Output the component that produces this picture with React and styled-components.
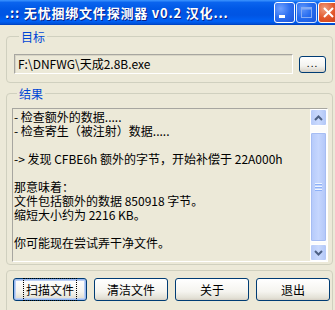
import styled, { createGlobalStyle } from "styled-components"

const Global = createGlobalStyle`
    html, body { margin: 0; padding: 0; background: #ECE9D8; }
    body { font-family: "Noto Sans CJK SC", "DejaVu Sans", sans-serif; font-size: 12px; }
`;

const Window = styled.div`
    width: 335px;
    height: 310px;
    overflow: hidden;
    background: #ECE9D8;
    display: flex;
    flex-direction: column;
`;

const TitleBar = styled.div`
    height: 25px;
    flex-shrink: 0;
    display: flex;
    align-items: center;
    padding-left: 5px;
    background: linear-gradient(to bottom, #3D95FF 0%, #0A64EE 10%, #0058E6 35%, #0054E3 60%, #0061F5 85%, #0050D8 95%, #003EBA 100%);
`;

const Title = styled.span`
    flex: 1;
    color: #fff;
    font-weight: 700;
    font-size: 13px;
    letter-spacing: 0.8px;
    white-space: nowrap;
    text-shadow: 1px 1px 0 #0A1F86;
`;

const Caps = styled.div`
    display: flex;
    gap: 1px;
    margin-right: -4px;
    align-self: flex-start;
    margin-top: 2px;
`;

const CapButton = styled.div`
    width: 21px;
    height: 21px;
    box-sizing: border-box;
    border: 1px solid #fff;
    border-radius: 3px;
    display: flex;
    align-items: center;
    justify-content: center;
    background: ${p => p.$close
        ? "radial-gradient(circle at 30% 30%, #F0A080 0%, #E2572C 50%, #C8401A 100%)"
        : "radial-gradient(circle at 30% 30%, #6FA0FF 0%, #2B6EF0 50%, #1F55D8 100%)"};
    opacity: ${p => p.$disabled ? 0.85 : 1};
`;

const Body = styled.div`
    flex: 1;
    display: flex;
    flex-direction: column;
    padding: 5px 2px 0 6px;
`;

const Group = styled.fieldset`
    margin: ${p => p.$gap || 0}px 0 0 0;
    padding: ${p => p.$pad};
    border: 1px solid #D0D0BF;
    border-radius: 4px;
    min-width: 0;
`;

const Legend = styled.legend`
    color: #0046D5;
    padding: 0 2px;
    margin-left: 5px;
    line-height: 13px;
    font-size: 12px;
`;

const Row = styled.div`
    display: flex;
    align-items: center;
    gap: 6px;
`;

const Edit = styled.div`
    width: 280px;
    height: 20px;
    box-sizing: border-box;
    border: 1px solid;
    border-color: #A7A6A0 #FFFFFF #FFFFFF #A7A6A0;
    box-shadow: inset 1px 1px 0 #D8D5C6;
    padding: 0 3px;
    line-height: 18px;
    color: #000;
    white-space: nowrap;
`;

const SmallButton = styled.div`
    width: 27px;
    height: 17px;
    box-sizing: border-box;
    border: 1px solid #003C74;
    border-radius: 3px;
    background: linear-gradient(to bottom, #FFFFFF 0%, #F3F3EF 60%, #D6D0C5 100%);
    display: flex;
    align-items: center;
    justify-content: center;
    font-size: 10px;
    line-height: 8px;
    letter-spacing: 1px;
    padding-bottom: 3px;
`;

const Memo = styled.div`
    height: 154px;
    box-sizing: border-box;
    border: 1px solid;
    border-color: #A7A6A0 #FFFFFF #FFFFFF #A7A6A0;
    display: flex;
`;

const MemoText = styled.div`
    flex: 1;
    padding: 1px 1px;
    overflow: hidden;
`;

const MemoLine = styled.div`
    height: 14px;
    line-height: 14px;
    white-space: pre;
    color: #000;
`;

const ScrollBar = styled.div`
    width: 17px;
    display: flex;
    flex-direction: column;
    background: #FCFCFB;
`;

const ScrollArrow = styled.div`
    height: 17px;
    box-sizing: border-box;
    border: 1px solid #fff;
    border-radius: 2px;
    background: linear-gradient(to right, #B7CBF9 0%, #C9D9FD 50%, #B2C7F7 100%);
    display: flex;
    align-items: center;
    justify-content: center;
`;

const Track = styled.div`
    flex: 1;
    display: flex;
    flex-direction: column;
    padding: 6px 0 2px;
`;

const Thumb = styled.div`
    flex: 1;
    box-sizing: border-box;
    border: 1px solid #fff;
    border-radius: 2px;
    background: linear-gradient(to right, #B4C9FA 0%, #C5D6FE 50%, #B1C6F8 100%);
    box-shadow: inset 0 0 0 1px #A6BDF3;
    display: flex;
    flex-direction: column;
    align-items: center;
    justify-content: center;
    gap: 1px;
`;

const Grip = styled.div`
    width: 7px;
    height: 1px;
    background: #EEF4FE;
    border-bottom: 1px solid #8CB0F8;
`;

const ButtonRow = styled.div`
    display: flex;
    gap: 7px;
`;

const Button = styled.div`
    width: 74px;
    height: 23px;
    box-sizing: border-box;
    border: 1px solid #003C74;
    border-radius: 3px;
    background: linear-gradient(to bottom, #FFFFFF 0%, #F5F4EF 60%, #E3E1D6 90%, #D6D0C5 100%);
    box-shadow: ${p => p.$focus ? "inset 0 0 0 1px #98B8F0, inset 0 0 0 2px #BCD0F4" : "none"};
    display: flex;
    align-items: center;
    justify-content: center;
    color: #000;
    font-size: 12px;
`;

const FocusLabel = styled.span`
    outline: ${p => p.$focus ? "1px dotted #000" : "none"};
    outline-offset: 2px;
`;

const lines = [
    "- 检查额外的数据.....",
    "- 检查寄生（被注射）数据.....",
    "",
    "-> 发现 CFBE6h 额外的字节，开始补偿于 22A000h",
    "",
    "那意味着：",
    "文件包括额外的数据 850918 字节。",
    "缩短大小约为 2216 KB。",
    "",
    "你可能现在尝试弄干净文件。",
];

const Chevron = ({ down }) => (
    <svg width="9" height="6" viewBox="0 0 9 6">
        <path d={down ? "M1 1 L4.5 4.5 L8 1" : "M1 5 L4.5 1.5 L8 5"} stroke="#4D6185" strokeWidth="2" fill="none" />
    </svg>
);

const App = () => {
    return (
        <Window>
            <Global />
            <TitleBar>
                <Title>.:: 无忧捆绑文件探测器 v0.2 汉化...</Title>
                <Caps>
                    <CapButton>
                        <svg width="19" height="19" viewBox="0 0 19 19"><rect x="4" y="12" width="6" height="3" fill="#fff" /></svg>
                    </CapButton>
                    <CapButton $disabled>
                        <svg width="19" height="19" viewBox="0 0 19 19"><rect x="4.5" y="4.5" width="10" height="10" fill="none" stroke="#9DBBF7" strokeWidth="1" /><rect x="4.5" y="4.5" width="10" height="2" fill="#9DBBF7" /></svg>
                    </CapButton>
                    <CapButton $close>
                        <svg width="19" height="19" viewBox="0 0 19 19"><path d="M5 5 L14 14 M14 5 L5 14" stroke="#fff" strokeWidth="2" /></svg>
                    </CapButton>
                </Caps>
            </TitleBar>
            <Body>
                <Group $pad="11px 6px 8px 7px">
                    <Legend>目标</Legend>
                    <Row>
                        <Edit>F:\DNFWG\天成2.8B.exe</Edit>
                        <SmallButton>...</SmallButton>
                    </Row>
                </Group>
                <Group $gap={4} $pad="8px 4px 2px 5px">
                    <Legend>结果</Legend>
                    <Memo>
                        <MemoText>
                            {lines.map((l, i) => <MemoLine key={i}>{l}</MemoLine>)}
                        </MemoText>
                        <ScrollBar>
                            <ScrollArrow><Chevron /></ScrollArrow>
                            <Track>
                                <Thumb>
                                    <Grip /><Grip /><Grip />
                                </Thumb>
                            </Track>
                            <ScrollArrow><Chevron down /></ScrollArrow>
                        </ScrollBar>
                    </Memo>
                </Group>
                <Group $gap={5} $pad="7px 2px 12px 6px">
                    <ButtonRow>
                        <Button $focus><FocusLabel $focus>扫描文件</FocusLabel></Button>
                        <Button>清洁文件</Button>
                        <Button>关于</Button>
                        <Button>退出</Button>
                    </ButtonRow>
                </Group>
            </Body>
        </Window>
    )
}
export default App;
